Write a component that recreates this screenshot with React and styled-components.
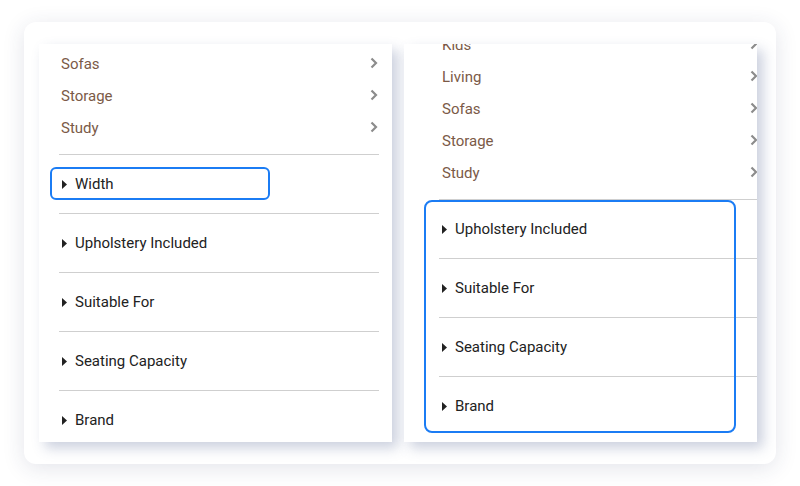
import React from "react";
import styled, { createGlobalStyle } from "styled-components";

const Global = createGlobalStyle`
  html, body { margin: 0; padding: 0; background: #ffffff; }
  body { font-family: Roboto, "Noto Sans", "Liberation Sans", sans-serif; }
  * { box-sizing: border-box; }
`;

const Page = styled.div`
  width: 800px;
  height: 486px;
  padding: 22px 24px 22px 24px;
`;

const Card = styled.div`
  height: 442px;
  background: #fff;
  border-radius: 12px;
  box-shadow: 0 4px 22px rgba(40, 50, 90, 0.13);
  padding: 22px 19px 22px 15px;
  display: flex;
  gap: 12px;
`;

const Panel = styled.div`
  width: 353px;
  height: 398px;
  background: #fff;
  overflow: hidden;
  box-shadow: 6px 6px 12px rgba(70, 85, 135, 0.28);
`;

const Content = styled.div`
  width: 320px;
  margin-left: ${(p) => p.$left}px;
  margin-top: ${(p) => p.$scroll}px;
`;

const CategoryList = styled.ul`
  list-style: none;
  margin: 0;
  padding: 0 0 10px;
  border-bottom: 1px solid #cfcfcf;
`;

const CategoryRow = styled.li`
  height: 32px;
  display: flex;
  align-items: center;
  justify-content: space-between;
  padding-left: ${(p) => p.$indent}px;
  font-size: 15px;
  color: #7b5a47;
`;

const Chevron = styled.svg`
  width: 8px;
  height: 12px;
  margin-right: 1px;
  margin-top: -2px;
  flex: none;
`;

const Group = styled.div`
  position: relative;
`;

const Item = styled.div`
  position: relative;
  height: 59px;
  border-bottom: ${(p) => (p.$last ? "none" : "1px solid #cfcfcf")};
`;

const Header = styled.div`
  height: 58px;
  display: flex;
  align-items: center;
  padding-left: 3px;
  gap: 8px;
  font-size: 15px;
  color: #222222;
`;

const Caret = styled.svg`
  width: 5px;
  height: 9px;
  flex: none;
`;

const FocusRing = styled.div`
  position: absolute;
  border: 2px solid #1b7cf4;
  pointer-events: none;
  top: ${(p) => p.$top}px;
  left: ${(p) => p.$left}px;
  width: ${(p) => (p.$width ? `${p.$width}px` : "auto")};
  height: ${(p) => (p.$height ? `${p.$height}px` : "auto")};
  right: ${(p) => (p.$right !== undefined ? `${p.$right}px` : "auto")};
  bottom: ${(p) => (p.$bottom !== undefined ? `${p.$bottom}px` : "auto")};
  border-radius: ${(p) => p.$radius}px;
`;

const ChevronIcon = () => (
  <Chevron viewBox="0 0 8 12">
    <polyline
      points="1.5,1.5 6,6 1.5,10.5"
      fill="none"
      stroke="#8c8c8c"
      strokeWidth="2.2"
      strokeLinejoin="miter"
    />
  </Chevron>
);

const CaretIcon = () => (
  <Caret viewBox="0 0 5 9">
    <polygon points="0,0 5,4.5 0,9" fill="#222" />
  </Caret>
);

const AccordionHeader = ({ label }) => (
  <Header>
    <CaretIcon />
    {label}
  </Header>
);

const Categories = ({ items, indent }) => (
  <CategoryList>
    {items.map((c) => (
      <CategoryRow key={c} $indent={indent}>
        {c}
        <ChevronIcon />
      </CategoryRow>
    ))}
  </CategoryList>
);

const filters = ["Upholstery Included", "Suitable For", "Seating Capacity", "Brand"];

export default function App() {
  return (
    <>
      <Global />
      <Page>
        <Card>
          <Panel>
            <Content $left={20} $scroll={4}>
              <Categories items={["Sofas", "Storage", "Study"]} indent={2} />
              <Item>
                <AccordionHeader label="Width" />
                <FocusRing $top={12} $left={-9} $width={220} $height={33} $radius={6} />
              </Item>
              {filters.map((f) => (
                <Item key={f}>
                  <AccordionHeader label={f} />
                </Item>
              ))}
            </Content>
          </Panel>
          <Panel>
            <Content $left={35} $scroll={-15}>
              <Categories items={["Kids", "Living", "Sofas", "Storage", "Study"]} indent={3} />
              <Group>
                {filters.map((f, i) => (
                  <Item key={f} $last={i === filters.length - 1}>
                    <AccordionHeader label={f} />
                  </Item>
                ))}
                <FocusRing $top={0} $left={-15} $right={23} $bottom={3} $radius={8} />
              </Group>
            </Content>
          </Panel>
        </Card>
      </Page>
    </>
  );
}
